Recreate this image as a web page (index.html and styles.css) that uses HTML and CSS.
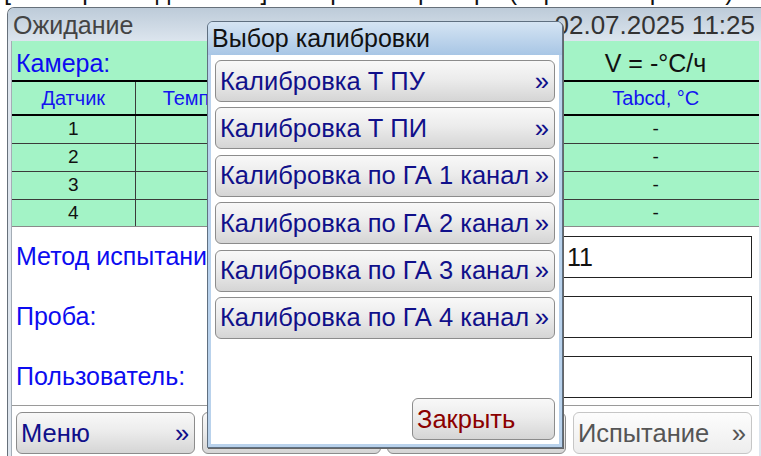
FILE: index.html
```html
<!DOCTYPE html>
<html lang="ru">
<head>
<meta charset="utf-8">
<title>Выбор калибровки</title>
<link rel="stylesheet" href="styles.css">
</head>
<body>
<div class="crumb"><span>[Калибровка датчиков] Настройка прибора (сервисный режим)</span></div>

<div class="window">
  <div class="titlebar">
    <span class="state">Ожидание</span>
    <span class="clock">02.07.2025 11:25</span>
  </div>
  <div class="frame">
    <div class="content">
      <section class="sensors">
        <div class="chamber">
          <span class="chamber-label">Камера:</span>
          <span class="rate">V = -°C/ч</span>
        </div>
        <table class="grid">
          <colgroup>
            <col class="c-num"><col class="c-temp"><col class="c-corr"><col class="c-abcd">
          </colgroup>
          <thead>
            <tr><th>Датчик</th><th>Температура, °C</th><th></th><th>Tabcd, °C</th></tr>
          </thead>
          <tbody>
            <tr><td>1</td><td></td><td></td><td>-</td></tr>
            <tr><td>2</td><td></td><td></td><td>-</td></tr>
            <tr><td>3</td><td></td><td></td><td>-</td></tr>
            <tr><td>4</td><td></td><td></td><td>-</td></tr>
          </tbody>
        </table>
      </section>

      <section class="params">
        <div class="param">
          <span class="param-label">Метод испытания:</span>
          <span class="field">11</span>
        </div>
        <div class="param">
          <span class="param-label">Проба:</span>
          <span class="field"></span>
        </div>
        <div class="param">
          <span class="param-label">Пользователь:</span>
          <span class="field"></span>
        </div>
      </section>

      <nav class="actions">
        <button class="btn">Меню<span class="more">»</span></button>
        <button class="btn"></button>
        <button class="btn"></button>
        <button class="btn btn-off">Испытание<span class="more">»</span></button>
      </nav>
    </div>
  </div>
</div>

<div class="dialog">
  <div class="dialog-title">Выбор калибровки</div>
  <div class="dialog-body">
    <button class="btn">Калибровка Т ПУ<span class="more">»</span></button>
    <button class="btn">Калибровка Т ПИ<span class="more">»</span></button>
    <button class="btn">Калибровка по ГА 1 канал<span class="more">»</span></button>
    <button class="btn">Калибровка по ГА 2 канал<span class="more">»</span></button>
    <button class="btn">Калибровка по ГА 3 канал<span class="more">»</span></button>
    <button class="btn">Калибровка по ГА 4 канал<span class="more">»</span></button>
    <button class="btn btn-close">Закрыть</button>
  </div>
</div>
</body>
</html>
```
FILE: styles.css
```css
* { box-sizing: border-box; }

body {
  margin: 0;
  width: 761px;
  height: 456px;
  overflow: hidden;
  position: relative;
  background: #fff;
  font-family: "Liberation Sans", Arial, sans-serif;
  color: #111;
}

/* line of the previous screen, only its lower edge is left on screen */
.crumb {
  height: 7px;
  overflow: hidden;
  font-size: 25px;
  line-height: 25px;
  white-space: nowrap;
  padding-left: 4px;
}
.crumb span { display: block; margin-top: -21px; }

/* main window */
.window {
  margin-left: 7px;
  height: 449px;
  border: 1px solid #66707a;
  border-right: 0;
  border-bottom: 0;
  border-radius: 7px 0 0 0;
  background: #dfe6ee;
  display: flex;
  flex-direction: column;
  overflow: hidden;
}

.titlebar {
  height: 33px;
  flex: none;
  display: flex;
  justify-content: space-between;
  align-items: center;
  padding: 2px 6px 0 5px;
  background: linear-gradient(#bdcbd9, #dce5ee);
  font-size: 25px;
  color: #444;
}
.clock { font-size: 26px; color: #333; }

.frame {
  flex: 1;
  padding: 0 2px 0 3px;
}

.content {
  height: 100%;
  background: #fff;
  border-left: 1px solid #a4adb6;
  display: flex;
  flex-direction: column;
}

/* sensors block */
.sensors { background: #a3f3c6; }

.chamber {
  height: 39px;
  display: flex;
  align-items: center;
  padding-top: 5px;
  font-size: 25px;
}
.chamber-label { flex: 1; padding-left: 4px; color: #0c0cf0; }
.rate { width: 207px; text-align: center; color: #111; }

.grid {
  width: 100%;
  border-collapse: collapse;
  table-layout: fixed;
}
.c-num { width: 123px; }
.c-temp { width: 210px; }
.c-corr { width: 207px; }
.c-abcd { width: 207px; }

.grid th {
  height: 34px;
  padding: 0;
  font-weight: normal;
  font-size: 20px;
  color: #1414f0;
  border-top: 2px solid #000;
  border-bottom: 2px solid #000;
}
.grid td {
  height: 28px;
  padding: 0;
  text-align: center;
  font-size: 19px;
  color: #111;
  border-bottom: 1px solid #3a3a3a;
}
.grid tr:last-child td { height: 27px; border-bottom-color: #8a8a8a; }
.grid th + th, .grid td + td { border-left: 1px solid #3a3a3a; }

/* parameters block */
.params {
  flex: 1;
  display: flex;
  flex-direction: column;
  gap: 18px;
  padding: 9px 0 0 4px;
  border-bottom: 1px solid #9a9a9a;
}
.param {
  display: flex;
  align-items: center;
  height: 42px;
  font-size: 25px;
}
.param-label { flex: 1; color: #0c0cf0; }
.field {
  width: 190px;
  height: 42px;
  margin-right: 7px;
  border: 1px solid #222;
  background: #fff;
  padding-left: 4px;
  line-height: 40px;
  color: #111;
}

/* bottom buttons */
.actions {
  height: 50px;
  flex: none;
  display: flex;
  gap: 6.5px;
  padding: 6px 7px 0 4px;
}
.actions .btn { flex: 1; }

.btn {
  height: 42px;
  display: flex;
  align-items: center;
  justify-content: space-between;
  padding: 0 5px 0 4px;
  border: 1px solid #8c8c8c;
  border-radius: 6px;
  background: linear-gradient(#f8f8f8 0%, #ececec 45%, #d5d5d5 100%);
  font-family: inherit;
  font-size: 25.5px;
  color: #10108a;
  text-align: left;
}

.btn-off {
  border-color: #c6c6c6;
  background: linear-gradient(#fdfdfd, #ededed);
  color: #555;
}

/* calibration dialog */
.dialog {
  position: absolute;
  left: 207px;
  top: 21px;
  width: 356px;
  height: 427px;
  border: 1px solid #5f6f80;
  border-radius: 6px 6px 0 0;
  background: #b9d2ec;
  display: flex;
  flex-direction: column;
  box-shadow: 1px 1px 0 #666;
}
.dialog-title {
  height: 33px;
  flex: none;
  display: flex;
  align-items: center;
  padding: 0 0 0 4px;
  border-radius: 5px 5px 0 0;
  background: linear-gradient(#d5e4f3, #a8c6e5);
  font-size: 25px;
  color: #111;
}
.dialog-body {
  flex: 1;
  margin: 0 3px 3px 3px;
  background: #fff;
  padding: 5px 4px 4px 4px;
  display: flex;
  flex-direction: column;
  gap: 5.4px;
}
.dialog-body .btn { flex: none; }
.btn-close {
  margin-top: auto;
  align-self: flex-end;
  width: 143px;
  color: #8b0000;
}
```
